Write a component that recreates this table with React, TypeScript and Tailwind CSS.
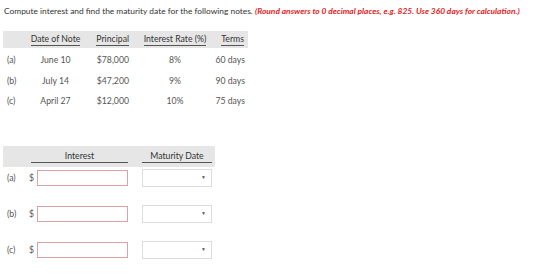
const rows = [
  { id: "(a)", date: "June 10", principal: "$78,000", rate: "8%", terms: "60 days" },
  { id: "(b)", date: "July 14", principal: "$47,200", rate: "9%", terms: "90 days" },
  { id: "(c)", date: "April 27", principal: "$12,000", rate: "10%", terms: "75 days" },
];

function Select() {
  return (
    <div className="flex h-[18px] w-[70px] items-center justify-end border border-[#dcdcdc] bg-white pr-[5px]">
      <span className="text-[5px] leading-none text-[#555]">▼</span>
    </div>
  );
}

export default function App() {
  return (
    <div className="h-[274px] w-[560px] bg-white text-[#333]" style={{ fontFamily: "Lato, 'Open Sans', sans-serif" }}>
      <p className="pl-[4px] pt-[6px] text-[8.4px] leading-[10px] whitespace-nowrap">
        Compute interest and find the maturity date for the following notes.{" "}
        <span className="font-bold italic text-[#e31b23]">
          (Round answers to 0 decimal places, e.g. 825. Use 360 days for calculation.)
        </span>
      </p>

      <div className="ml-[3px] mt-[15px] w-[245px] text-[8.7px] leading-[10px]">
        <div className="grid h-[17px] grid-cols-[22px_61px_50px_78px_34px] items-end bg-[#e6e6e6] pb-[2px] text-[#333]">
          <div />
          <div className="text-center"><span className="inline-block border-b border-[#555] pb-[1px]">Date of Note</span></div>
          <div className="pr-[7px] text-right"><span className="inline-block border-b border-[#555] pb-[1px]">Principal</span></div>
          <div className="text-center"><span className="inline-block border-b border-[#555] pb-[1px]">Interest Rate (%)</span></div>
          <div className="pr-[4px] text-right"><span className="inline-block border-b border-[#555] pb-[1px]">Terms</span></div>
        </div>
        <div className="mt-[2px] text-[#555]">
          {rows.map((r) => (
            <div key={r.id} className="grid h-[20.5px] grid-cols-[22px_61px_50px_78px_34px] items-center">
              <div className="pl-[4px]">{r.id}</div>
              <div className="text-center">{r.date}</div>
              <div className="pr-[7px] text-right">{r.principal}</div>
              <div className="text-center">{r.rate}</div>
              <div className="pr-[3px] text-right">{r.terms}</div>
            </div>
          ))}
        </div>
      </div>

      <div className="ml-[3px] mt-[34px] w-[212px] text-[8.7px]">
        <div className="grid h-[21px] grid-cols-[26px_102px_11px_70px_3px] items-end bg-[#e6e6e6] pb-[4px] text-[#333]">
          <div />
          <div className="ml-[2px] mr-[3px] border-b border-[#555] pb-[1px] text-center leading-[10px]">Interest</div>
          <div />
          <div className="border-b border-[#555] pb-[1px] text-center leading-[10px]">Maturity Date</div>
          <div />
        </div>
        <div className="mt-[2px] flex flex-col gap-y-[18px] text-[#555]">
          {rows.map((r) => (
            <div key={r.id} className="grid h-[18px] grid-cols-[26px_102px_11px_70px] items-center">
              <div className="pl-[4px]">{r.id}</div>
              <div className="flex items-center">
                <span className="w-[8px]">$</span>
                <div className="h-[16px] w-[91px] border border-[#d9a3a3] bg-white" />
              </div>
              <div />
              <Select />
            </div>
          ))}
        </div>
      </div>
    </div>
  );
}
